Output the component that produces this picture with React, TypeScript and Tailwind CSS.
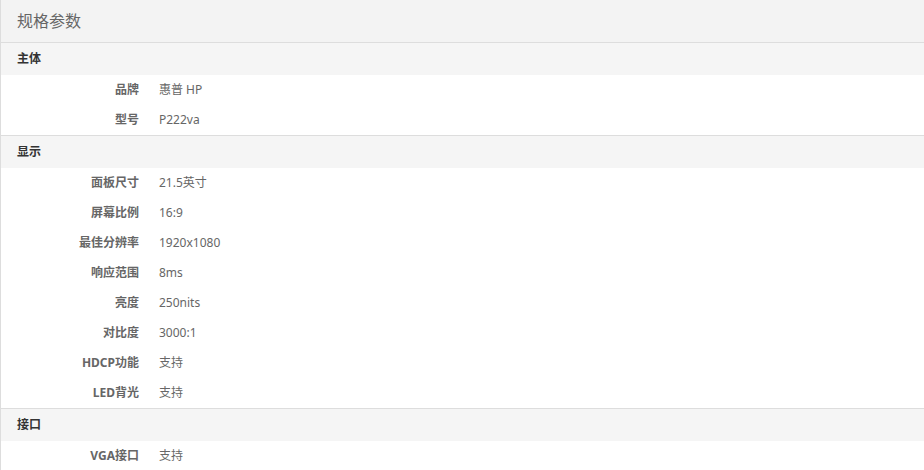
import React from "react";

type Row = [string, string];
const sections: { title: string; rows: Row[] }[] = [
  { title: "主体", rows: [["品牌", "惠普 HP"], ["型号", "P222va"]] },
  {
    title: "显示",
    rows: [
      ["面板尺寸", "21.5英寸"],
      ["屏幕比例", "16:9"],
      ["最佳分辨率", "1920x1080"],
      ["响应范围", "8ms"],
      ["亮度", "250nits"],
      ["对比度", "3000:1"],
      ["HDCP功能", "支持"],
      ["LED背光", "支持"],
    ],
  },
  { title: "接口", rows: [["VGA接口", "支持"]] },
];

export default function App() {
  return (
    <div
      className="w-[926px] min-h-[470px] bg-white border-l border-r border-[#dddddd]"
      style={{ fontFamily: '"Noto Sans", "Noto Sans CJK SC", sans-serif' }}
    >
      <div className="h-[43px] bg-[#f3f3f3] border-b border-[#dddddd] px-[16px] flex items-center text-[16px] text-[#666666]">
        规格参数
      </div>
      {sections.map((s, i) => (
        <div key={s.title} className={i > 0 ? "border-t border-[#dddddd]" : ""}>
          <div className="h-[32px] bg-[#f5f5f5] px-[16px] flex items-center text-[12px] font-bold text-[#333333]">
            {s.title}
          </div>
          {s.rows.map(([k, v]) => (
            <div key={k} className="h-[30px] flex items-center text-[12px] text-[#666666]">
              <div className="w-[138px] text-right font-bold">{k}</div>
              <div className="ml-[20px]">{v}</div>
            </div>
          ))}
        </div>
      ))}
    </div>
  );
}
